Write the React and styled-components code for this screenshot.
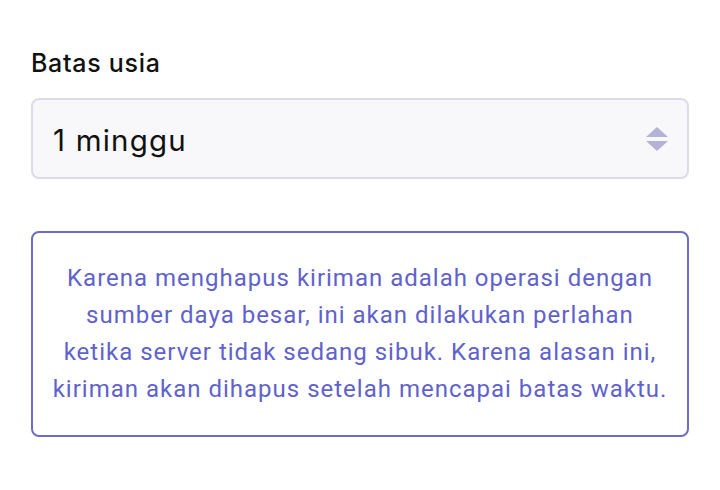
import React from 'react'
import styled, { createGlobalStyle } from 'styled-components'

const GlobalStyle = createGlobalStyle`
  html, body {
    margin: 0;
    padding: 0;
    background: #ffffff;
  }
`

const Page = styled.div`
  width: 720px;
  height: 490px;
  box-sizing: border-box;
  padding: 46px 31px 0 31px;
  display: flex;
  flex-direction: column;
`

const Label = styled.label`
  font-family: Inter, "Noto Sans", sans-serif;
  font-size: 25px;
  font-weight: 500;
  letter-spacing: 0.7px;
  color: #111;
  line-height: 34px;
  margin-bottom: 18px;
`

const SelectBox = styled.div`
  position: relative;
  height: 81px;
  box-sizing: border-box;
  border: 2px solid #dcdce6;
  border-radius: 8px;
  background: #f8f8fb;
  display: flex;
  align-items: center;
  padding: 2px 20px 0 20px;
  font-family: Inter, "Noto Sans", sans-serif;
  font-size: 29.5px;
  letter-spacing: 1.2px;
  color: #111;
`

const Arrows = styled.svg`
  position: absolute;
  right: 18px;
  top: 50%;
  transform: translateY(-50%);
`

const Notice = styled.div`
  margin-top: 52px;
  height: 206px;
  box-sizing: border-box;
  border: 2px solid #6b6ccb;
  border-radius: 8px;
  display: flex;
  align-items: center;
  justify-content: center;
  padding: 0 16px;
  text-align: center;
  font-family: Roboto, "Noto Sans", sans-serif;
  font-size: 24px;
  letter-spacing: 1px;
  line-height: 37px;
  color: #5f62cc;
`

export default function App() {
  return (
    <>
      <GlobalStyle />
      <Page>
        <Label>Batas usia</Label>
        <SelectBox>
          1 minggu
          <Arrows width="24" height="28" viewBox="0 0 24 28">
            <path d="M12 2 L23 12 L1 12 Z" fill="#b6b2d6" />
            <path d="M1 16 L23 16 L12 26 Z" fill="#b6b2d6" />
          </Arrows>
        </SelectBox>
        <Notice>
          Karena menghapus kiriman adalah operasi dengan sumber daya besar, ini akan dilakukan perlahan ketika server tidak sedang sibuk. Karena alasan ini, kiriman akan dihapus setelah mencapai batas waktu.
        </Notice>
      </Page>
    </>
  )
}
